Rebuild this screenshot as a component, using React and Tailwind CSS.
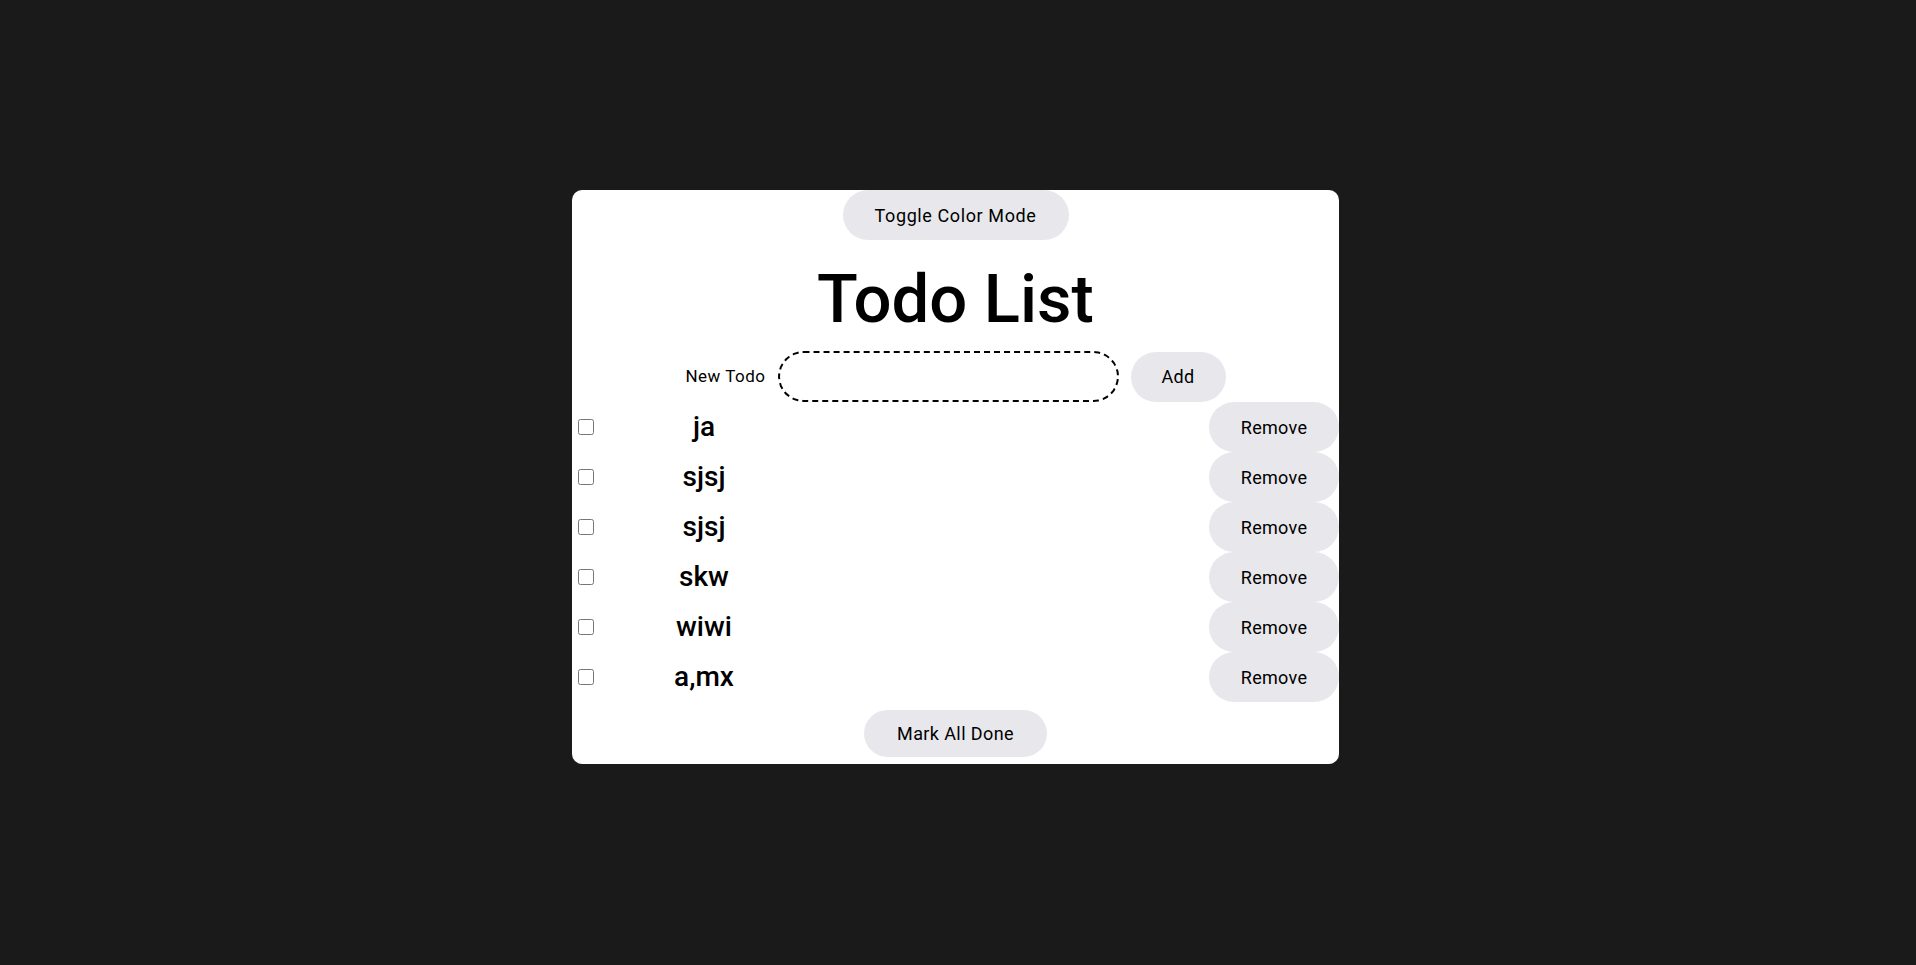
import { useState } from 'react'

const initialTodos = ['ja', 'sjsj', 'sjsj', 'skw', 'wiwi', 'a,mx']

export default function App() {
    const [todos, setTodos] = useState(initialTodos.map((text) => ({ text, done: false })))
    const [draft, setDraft] = useState('')

    function addTodo() {
        if (!draft.trim()) return
        setTodos([...todos, { text: draft, done: false }])
        setDraft('')
    }

    return (
        <div className="min-h-screen bg-[#1a1a1a] flex items-center justify-center pb-[11px] pr-[5px] font-['Roboto',sans-serif] text-black">
            <div className="w-[767px] bg-white rounded-[10px] flex flex-col items-center pb-[7px]">
                <button className="w-[226px] h-[50px] rounded-full bg-[#e8e8ec] text-[18px] tracking-[0.6px]">Toggle Color Mode</button>
                <h1 className="mt-[21px] mb-[13px] text-[67px] leading-[77px] font-medium">Todo List</h1>
                <div className="h-[51px] flex items-center gap-3">
                    <label className="text-[17px] tracking-[0.5px]">New Todo</label>
                    <input
                        value={draft}
                        onChange={(e) => setDraft(e.target.value)}
                        className="w-[341px] h-[51px] border-2 border-dashed border-black rounded-[26px] px-4 outline-none"
                    />
                    <button onClick={addTodo} className="w-[95px] h-[50px] rounded-full bg-[#e8e8ec] text-[18px] tracking-[0.3px]">Add</button>
                </div>
                <ul className="w-full">
                    {todos.map((todo, i) => (
                        <li key={i} className="h-[50px] flex items-center">
                            <input
                                type="checkbox"
                                checked={todo.done}
                                onChange={() => setTodos(todos.map((t, j) => (j === i ? { ...t, done: !t.done } : t)))}
                                className="m-0 ml-[6px] w-[16px] h-[16px]"
                            />
                            <span className="w-[220px] text-center text-[28px] font-medium">{todo.text}</span>
                            <button
                                onClick={() => setTodos(todos.filter((_, j) => j !== i))}
                                className="ml-auto w-[130px] h-[50px] rounded-full bg-[#e8e8ec] text-[18px] tracking-[0.3px]"
                            >
                                Remove
                            </button>
                        </li>
                    ))}
                </ul>
                <button
                    onClick={() => setTodos(todos.map((t) => ({ ...t, done: true })))}
                    className="mt-[8px] w-[183px] h-[47px] rounded-full bg-[#e8e8ec] text-[18px] tracking-[0.4px]"
                >
                    Mark All Done
                </button>
            </div>
        </div>
    )
}
